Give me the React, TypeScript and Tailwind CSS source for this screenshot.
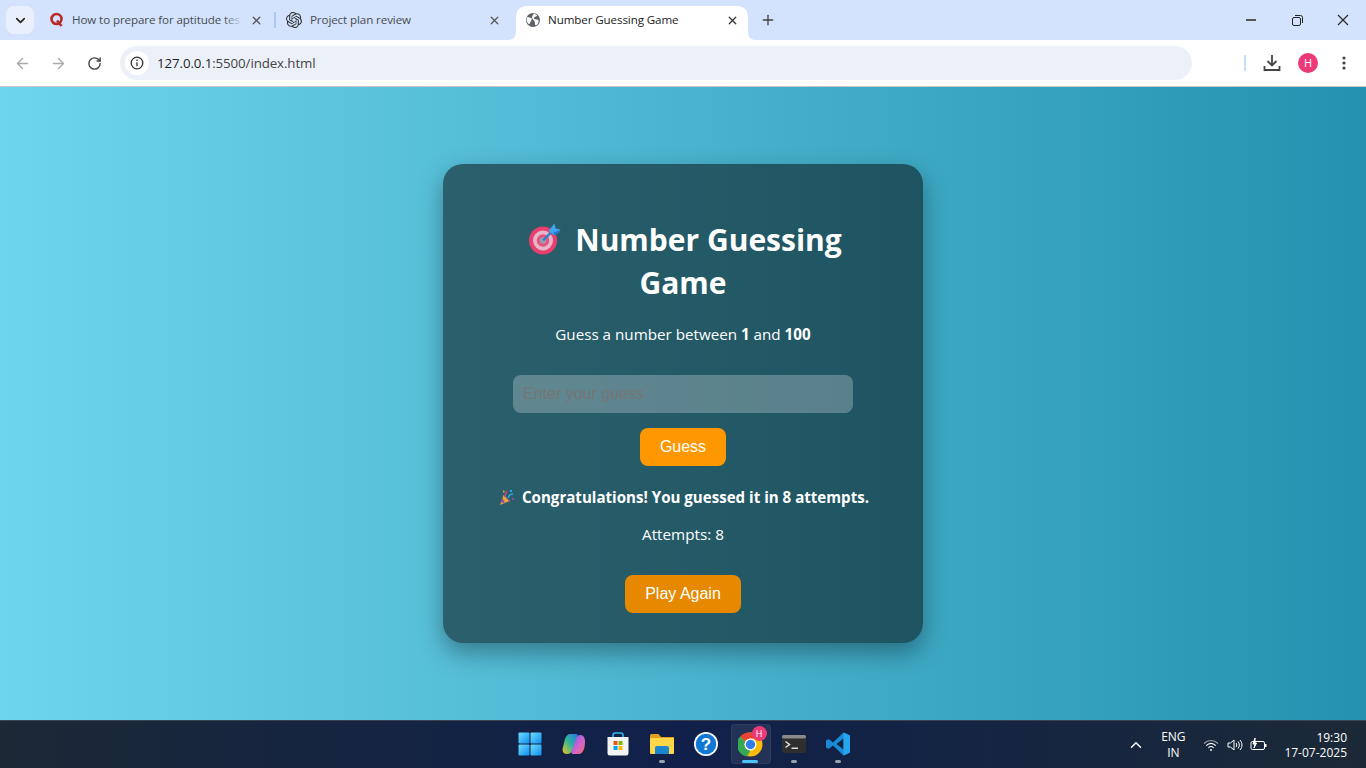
import React from "react";
import { ArrowLeft, ArrowRight, RotateCw, X, Plus, ChevronDown, ChevronUp } from "lucide-react";
import { SiOpenai } from "react-icons/si";

const ui = "font-['Open_Sans','Noto_Sans',sans-serif]";

function Globe() {
  return (
    <svg width="16" height="16" viewBox="0 0 16 16">
      <circle cx="8" cy="8" r="7" fill="#5f6368" />
      <path d="M2 5c2 0 3 1 4 1s1 2 0 3-1 3-2 3-3-3-2-7zM9 1.500c1 1 3 1 3 2s-2 1-3 2 1 2 3 2 2 2 1 4-3 2-3 1 0-3-1-4-2-2-2-3 1-3 2-4z" fill="#fff" />
    </svg>
  );
}

function QuoraIcon() {
  return (
    <svg width="16" height="16" viewBox="0 0 16 16" fill="none">
      <circle cx="7.500" cy="7" r="5" stroke="#b92b27" strokeWidth="2.600" />
      <path d="M8 8.500l4.500 5.500" stroke="#b92b27" strokeWidth="2.600" />
    </svg>
  );
}

function Tab({ title, icon, active, fade, width, closeGap }: { title: string; icon: React.ReactNode; active?: boolean; fade?: boolean; width: string; closeGap: string }) {
  return (
    <div className={`relative h-[34px] pb-[6px] flex items-center shrink-0 ${width} ${active ? "bg-white rounded-t-[10px]" : ""}`}>
      {active && (
        <>
          <svg className="absolute left-[-8px] bottom-0" width="8" height="8" viewBox="0 0 8 8"><path d="M8 0v8H0c5 0 8-3 8-8z" fill="#fff" /></svg>
          <svg className="absolute right-[-8px] bottom-0" width="8" height="8" viewBox="0 0 8 8"><path d="M0 0v8h8C3 8 0 5 0 0z" fill="#fff" /></svg>
        </>
      )}
      <div className="ml-[9px] w-4 h-4 shrink-0">{icon}</div>
      <div className={`relative ml-[7px] flex-1 overflow-hidden whitespace-nowrap text-[11.600px] tracking-[-0.1px] ${active ? "text-[#222]" : "text-[#474b50]"}`}>
        {title}
        {fade && <div className="absolute right-0 top-0 bottom-0 w-5 bg-linear-to-r from-[#d3e3fd00] to-[#d3e3fd]" />}
      </div>
      <div className={`w-[26px] flex justify-center shrink-0 ${closeGap}`}>
        <X size={13} strokeWidth={2.400} className={active ? "text-[#333]" : "text-[#555]"} />
      </div>
    </div>
  );
}

function Target() {
  return (
    <svg width="34" height="32" viewBox="0 0 34 32" className="shrink-0">
      <circle cx="15" cy="17.500" r="14" fill="#e83f6f" />
      <circle cx="15" cy="17.500" r="10" fill="#e6b7cb" />
      <circle cx="15" cy="17.500" r="6.200" fill="#e8507e" />
      <circle cx="15" cy="17.500" r="3.200" fill="#9d9fae" />
      <path d="M15 17.500L26 6.500" stroke="#2e7fc9" strokeWidth="2.400" />
      <path d="M20.500 8l6-7.500 1 5 5 1-6.500 6z" fill="#42a5f0" />
      <path d="M25 10l7.500-3.500-1 3-4.500 3z" fill="#2b78c7" />
    </svg>
  );
}

function Popper() {
  return (
    <svg width="16" height="17" viewBox="0 0 16 17" className="shrink-0">
      <path d="M1 16l3.500-10 6 6z" fill="#e9a23b" />
      <path d="M2 13l1.500-4 2.500 5.500z" fill="#8e4bb5" />
      <path d="M6 8c0-3 1-4 2-6" stroke="#d23f8a" strokeWidth="1.500" fill="none" />
      <path d="M9 9c1-3 3-4 5-4" stroke="#2fa3e0" strokeWidth="1.500" fill="none" />
      <rect x="11" y="1" width="2" height="2" fill="#2fa3e0" />
      <rect x="13" y="9" width="2" height="2" fill="#8e4bb5" />
      <rect x="9" y="11" width="2" height="1.500" fill="#e14b7b" />
      <rect x="4" y="1.500" width="1.500" height="2" fill="#e9a23b" />
    </svg>
  );
}

function Card() {
  return (
    <div className={`w-[480px] h-[479px] rounded-[20px] bg-[rgba(0,0,0,0.5)] shadow-[0_10px_25px_rgba(0,0,0,0.35)] flex flex-col items-center text-white ${ui}`}>
      <h1 className="mt-[54px] w-[400px] text-center text-[30px] leading-[43px] font-bold text-white">
        <div className="h-[43px] flex items-center justify-center ml-[4px]">
          <span className="mr-[13px] mb-[2px]"><Target /></span>
          <span>Number Guessing</span>
        </div>
        <div>Game</div>
      </h1>
      <p className="mt-[20px] text-[15.200px] leading-[21px] text-white">
        Guess a number between <strong>1</strong> and <strong>100</strong>
      </p>
      <input
        disabled
        placeholder="Enter your guess"
        className="mt-[30px] w-[340px] h-[38px] rounded-[8px] bg-[rgba(255,255,255,0.26)] px-[10px] text-[16px] font-['Liberation_Sans',sans-serif] placeholder:text-[#757575] outline-none"
      />
      <button className="mt-[15px] h-[38px] w-[86px] rounded-[8px] bg-[#ff9800] text-[16px] text-white font-['Liberation_Sans',sans-serif]">Guess</button>
      <div className="mt-[21px] h-[21px] flex items-center text-[15.100px] font-bold leading-[21px] ml-[2px]">
        <span className="mr-[7px]"><Popper /></span>
        Congratulations! You guessed it in 8 attempts.
      </div>
      <p className="mt-[16px] text-[15.250px] leading-[21px]">Attempts: 8</p>
      <button className="mt-[30px] h-[38px] w-[116px] rounded-[8px] bg-[#e68900] text-[16px] text-white font-['Liberation_Sans',sans-serif]">Play Again</button>
    </div>
  );
}

function TaskIcon({ children, dot, active }: { children: React.ReactNode; dot?: boolean; active?: boolean }) {
  return (
    <div className="relative w-[44px] h-[40px] flex items-center justify-center">
      {active && <div className="absolute left-[3px] right-[1px] top-0 bottom-0 rounded-[4px] bg-[#ffffff14] border border-[#ffffff0d]" />}
      <div className="relative">{children}</div>
      {dot && <div className="absolute bottom-[1px] left-[19px] w-[6px] h-[3px] rounded-full bg-[#9aa3ad]" />}
      {active && <div className="absolute bottom-[1px] left-[14px] w-4 h-[3px] rounded-full bg-[#4cc2ff]" />}
    </div>
  );
}

function Taskbar() {
  return (
    <div className={`h-[48px] shrink-0 border-t border-[#3a4452] bg-linear-to-r from-[#1b2836] via-[#10204a] to-[#1b2937] flex items-center relative ${ui}`}>
      <div className="flex-1" />
      <div className="flex items-center w-[352px] mr-[-2px] mb-[1px]">
        <TaskIcon>
          <svg width="24" height="24" viewBox="0 0 24 24">
            <defs><linearGradient id="w" x1="0" y1="0" x2="1" y2="1"><stop offset="0" stopColor="#6fdcfb" /><stop offset="1" stopColor="#0f8ff0" /></linearGradient></defs>
            <rect x="0.500" y="0.500" width="11" height="11" rx="1" fill="url(#w)" />
            <rect x="12.500" y="0.500" width="11" height="11" rx="1" fill="url(#w)" />
            <rect x="0.500" y="12.500" width="11" height="11" rx="1" fill="url(#w)" />
            <rect x="12.500" y="12.500" width="11" height="11" rx="1" fill="url(#w)" />
          </svg>
        </TaskIcon>
        <TaskIcon>
          <svg width="24" height="24" viewBox="0 0 24 24">
            <defs>
              <linearGradient id="c1" x1="0" y1="1" x2="1" y2="0"><stop offset="0" stopColor="#f5c518" /><stop offset="0.500" stopColor="#2fb59a" /><stop offset="1" stopColor="#2a78e4" /></linearGradient>
              <linearGradient id="c2" x1="0" y1="0" x2="1" y2="1"><stop offset="0" stopColor="#7a5be8" /><stop offset="0.600" stopColor="#d765c8" /><stop offset="1" stopColor="#f0684a" /></linearGradient>
            </defs>
            <path d="M8 2h6c2 0 2 2 1 4l-4 11c-1 3-3 5-6 5-4 0-5-3-4-7l2-8c1-3 3-5 5-5z" fill="url(#c1)" />
            <path d="M17 22h-6c-2 0-2-2-1-4l4-11c1-3 2-4 4-4 4 0 5 3 5 7 0 6-2 12-6 12z" fill="url(#c2)" />
          </svg>
        </TaskIcon>
        <TaskIcon>
          <svg width="24" height="24" viewBox="0 0 24 24">
            <path d="M7 6V3.500C7 2 8 1 9 1h6c1 0 2 1 2 2.500V6" fill="none" stroke="#35b6f0" strokeWidth="1.600" />
            <path d="M1.500 5h21v16a2.500 2.500 0 0 1-2.500 2.500H4A2.500 2.500 0 0 1 1.500 21z" fill="#f4f4f4" />
            <rect x="7.500" y="9" width="4" height="4" fill="#f25022" />
            <rect x="12.500" y="9" width="4" height="4" fill="#7fba00" />
            <rect x="7.500" y="14" width="4" height="4" fill="#00a4ef" />
            <rect x="12.500" y="14" width="4" height="4" fill="#ffb900" />
          </svg>
        </TaskIcon>
        <TaskIcon dot>
          <svg width="24" height="24" viewBox="0 0 24 24">
            <path d="M0 3.500A1.500 1.500 0 0 1 1.500 2h7l2.500 3h13v4H0z" fill="#e0a21c" />
            <rect x="0" y="6" width="24" height="16" rx="1" fill="#ffd54a" />
            <path d="M5 22v-6a2 2 0 0 1 2-2h10a2 2 0 0 1 2 2v6z" fill="#1a86cf" />
          </svg>
        </TaskIcon>
        <TaskIcon>
          <svg width="26" height="26" viewBox="0 0 26 26">
            <circle cx="13" cy="13" r="12" fill="#fff" />
            <circle cx="13" cy="13" r="10.300" fill="#0f78d4" />
            <text x="13" y="19" textAnchor="middle" fontFamily="Liberation Sans" fontWeight="700" fontSize="17" fill="#fff">?</text>
          </svg>
        </TaskIcon>
        <TaskIcon active>
          <div className="relative">
            <svg width="25" height="25" viewBox="0 0 48 48">
              <circle cx="24" cy="24" r="23" fill="#fbbc04" />
              <path d="M24 1a23 23 0 0 1 20 11.500H24a11.500 11.500 0 0 0-10 5.800L4 8.500A23 23 0 0 1 24 1z" fill="#ea4335" />
              <path d="M4 8.500l10 10a11.500 11.500 0 0 0 10 17.200L17.500 47A23 23 0 0 1 4 8.500z" fill="#34a853" />
              <circle cx="24" cy="24" r="11.500" fill="#fff" />
              <circle cx="24" cy="24" r="9" fill="#2f7de9" />
            </svg>
            <div className="absolute left-[14px] top-[-6px] w-[15px] h-[15px] rounded-full bg-[#ec3a78] text-white text-[9px] leading-[15px] text-center">H</div>
          </div>
        </TaskIcon>
        <TaskIcon dot>
          <svg width="24" height="18" viewBox="0 0 24 18">
            <rect x="0" y="0" width="24" height="18" rx="2" fill="#2f2f2f" />
            <rect x="0" y="0" width="24" height="3.500" rx="1.500" fill="#8a8a8a" />
            <path d="M3.500 6.500l4 3-4 3" fill="none" stroke="#ddd" strokeWidth="1.500" />
            <rect x="9.500" y="12.500" width="6.500" height="1.500" fill="#ddd" />
          </svg>
        </TaskIcon>
        <TaskIcon dot>
          <svg width="24" height="24" viewBox="0 0 24 24">
            <path d="M17.500 0.500L24 3.500v17L17.500 23.500 7 13.500l-4.500 3.500L0 15.500v-7L2.500 7 7 10.500z" fill="#1a8ad6" />
            <path d="M17.500 6.500L10.500 12l7 5.500z" fill="#12233f" />
            <path d="M17.500 0.500L24 3.500v17L17.500 23.500z" fill="#26a5ee" />
          </svg>
        </TaskIcon>
      </div>
      <div className="flex-1 flex items-center justify-end text-white">
        <ChevronUp size={18} strokeWidth={2} className="mr-[14px]" />
        <div className="text-[12px] leading-[16px] text-center mr-[16px] w-[28px]">
          <div>ENG</div>
          <div>IN</div>
        </div>
        <svg className="mr-[8px]" width="16" height="16" viewBox="0 0 16 16" fill="none" stroke="#fff" strokeWidth="1.100">
          <path d="M1 6.500c4-4 10-4 14 0" stroke="#9aa0a8" />
          <path d="M3.200 8.700c3-3 6.600-3 9.600 0" />
          <path d="M5.400 10.800c1.500-1.500 3.700-1.500 5.200 0" />
          <circle cx="8" cy="13" r="1" fill="#fff" stroke="none" />
        </svg>
        <svg className="mr-[7px]" width="16" height="16" viewBox="0 0 16 16" fill="none" stroke="#fff" strokeWidth="1">
          <path d="M1 6h2.500L7 3v10L3.500 10H1z" />
          <path d="M9 6c1 1 1 3 0 4M11 4.500c1.800 2 1.800 5 0 7M13 3c2.600 3 2.600 7 0 10" />
        </svg>
        <svg className="mr-[16px]" width="18" height="16" viewBox="0 0 18 16" fill="none" stroke="#fff" strokeWidth="1">
          <rect x="1" y="4.500" width="13.500" height="8" rx="1.500" />
          <path d="M15.500 7v3" strokeWidth="2" />
          <path d="M5 1L3 7h2l-1 4 2.500-5H5z" fill="#fff" />
        </svg>
        <div className="text-[12px] leading-[15px] text-right text-white mr-[19px]">
          <div>19:30</div>
          <div>17-07-2025</div>
        </div>
      </div>
    </div>
  );
}

export default function App() {
  return (
    <div className="w-[1366px] h-[768px] flex flex-col overflow-hidden">
      <div className={`h-[40px] shrink-0 bg-[#d3e3fd] flex items-end ${ui}`}>
        <div className="ml-[6px] mb-[6px] w-[28px] h-[28px] rounded-[8px] bg-[#e9f0fc] flex items-center justify-center shrink-0">
          <ChevronDown size={15} strokeWidth={2.600} className="text-[#222]" />
        </div>
        <Tab width="ml-[6px] w-[235px]" closeGap="mr-[6px]" fade title="How to prepare for aptitude tes" icon={<QuoraIcon />} />
        <div className="self-start mt-[12px] w-[2px] h-[16px] bg-[#a8c7fa] shrink-0 ml-[-1px]" />
        <Tab width="ml-[2px] w-[238px]" closeGap="mr-[9px]" title="Project plan review" icon={<SiOpenai size={16} className="text-[#333] ml-[-1px]" />} />
        <Tab active width="w-[232px]" closeGap="mr-[3px]" title="Number Guessing Game" icon={<Globe />} />
        <div className="mb-[12px] ml-[8px] w-[24px] flex justify-center shrink-0">
          <Plus size={16} strokeWidth={2} className="text-[#444]" />
        </div>
        <div className="flex-1" />
        <div className="h-[40px] flex items-center text-[#222]">
          <div className="w-[46px] flex justify-center"><div className="w-[10px] h-[1.500px] bg-[#555]" /></div>
          <div className="w-[46px] flex justify-center">
            <svg width="11" height="11" viewBox="0 0 11 11" fill="none" stroke="#222"><rect x="0.500" y="2.500" width="8" height="8" rx="1.500" /><path d="M3 .5h5.500a2 2 0 0 1 2 2V8" /></svg>
          </div>
          <div className="w-[46px] flex justify-center">
            <svg width="12" height="12" viewBox="0 0 12 12" stroke="#222" strokeWidth="1.100"><path d="M1 1l10 10M11 1L1 11" /></svg>
          </div>
        </div>
      </div>
      <div className={`h-[47px] shrink-0 bg-white border-b border-[#c7c7c7] rounded-t-[8px] flex items-center ${ui} relative z-10`}>
        <ArrowLeft size={17} className="ml-[14px] text-[#a8abaf]" strokeWidth={2} />
        <ArrowRight size={17} className="ml-[19px] text-[#a8abaf]" strokeWidth={2} />
        <RotateCw size={15} className="ml-[20px] text-[#444]" strokeWidth={2.200} />
        <div className="ml-[18px] w-[1072px] h-[34px] rounded-full bg-[#ecf1f9] flex items-center shrink-0">
          <div className="ml-[5px] w-[24px] h-[24px] rounded-full bg-white flex items-center justify-center">
            <svg width="14" height="14" viewBox="0 0 14 14" fill="none" stroke="#333" strokeWidth="1.300"><circle cx="7" cy="7" r="5.800" /><path d="M7 6.200v4" /><path d="M7 3.600v1.500" /></svg>
          </div>
          <div className="ml-[8px] pt-[1px] text-[13.300px] tracking-[-0.1px] text-[#1f1f1f]">127.0.0.1<span className="text-[#444]">:5500/index.html</span></div>
        </div>
        <div className="ml-[52px] w-[2px] h-[16px] bg-[#c5dcfb]" />
        <svg className="ml-[17px]" width="18" height="18" viewBox="0 0 18 18" fill="none" stroke="#444" strokeWidth="1.800"><path d="M9 1v10M4.500 7L9 11.500 13.500 7" /><path d="M1.500 12v4h15v-4" /></svg>
        <div className="ml-[17px] w-[20px] h-[20px] rounded-full bg-[#ec3a78] text-white text-[11px] leading-[20px] text-center">H</div>
        <svg className="ml-[18px]" width="16" height="16" viewBox="0 0 16 16" fill="#444"><circle cx="8" cy="3" r="1.600" /><circle cx="8" cy="8" r="1.600" /><circle cx="8" cy="13" r="1.600" /></svg>
      </div>
      <div className="flex-1 bg-linear-to-r from-[#6dd5ed] to-[#2193b0] flex items-center justify-center">
        <Card />
      </div>
      <Taskbar />
    </div>
  );
}
